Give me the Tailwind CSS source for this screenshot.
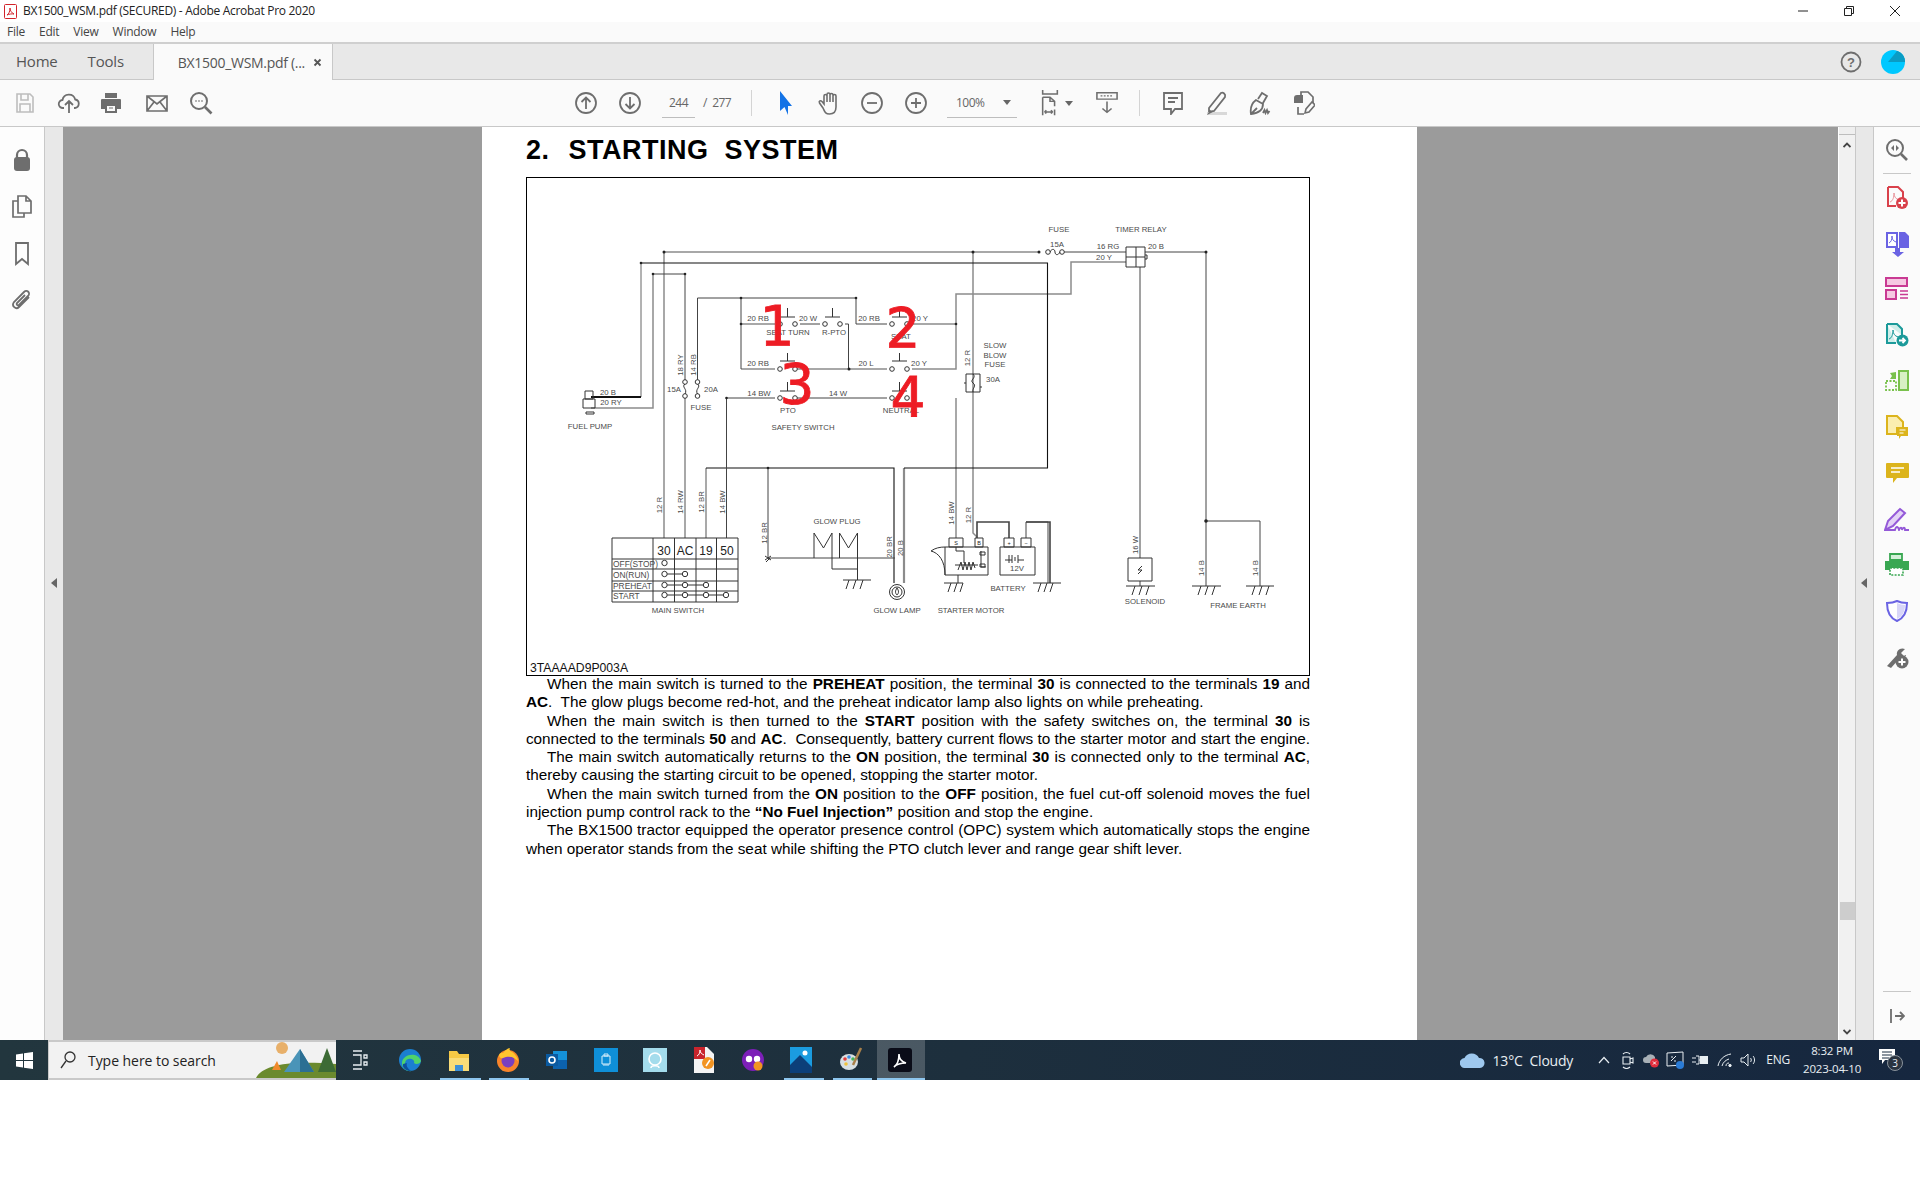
<!DOCTYPE html>
<html lang="en">
<head>
<meta charset="UTF-8" />
<title>BX1500_WSM.pdf (SECURED) - Adobe Acrobat Pro 2020</title>
<script src="https://cdn.jsdelivr.net/npm/@tailwindcss/browser@4"></script>
</head>
<body class="bg-white w-[1920px] h-[1188px] overflow-hidden font-['Open_Sans',sans-serif] text-[#4b4b4b]">

<!-- title bar -->
<div class="h-[22px] flex items-center bg-white text-[#222]">
  <svg class="ml-[4px] w-[13px] h-[15px]" viewBox="0 0 13 15"><rect x=".5" y=".5" width="12" height="14" rx="1" fill="#fff" stroke="#d2232a"/><path d="M3 11c2-1 3-4 3-7 0 3 2 5 4 6-2-.3-5 0-7 1z" fill="none" stroke="#d2232a"/></svg>
  <span class="ml-[6px] text-[12px] tracking-[-0.3px]">BX1500_WSM.pdf (SECURED) - Adobe Acrobat Pro 2020</span>
  <div class="ml-auto flex items-center">
    <svg class="w-[46px] h-[20px]" viewBox="0 0 46 20"><path d="M18 10h10" stroke="#222"/></svg>
    <svg class="w-[46px] h-[20px]" viewBox="0 0 46 20"><path d="M18.500 7.500h7v7h-7zM20.500 7.500v-2h7v7h-2" fill="none" stroke="#222"/></svg>
    <svg class="w-[46px] h-[20px] mr-[2px]" viewBox="0 0 46 20"><path d="M18 5l10 10M28 5L18 15" stroke="#222"/></svg>
  </div>
</div>

<!-- menu bar -->
<div class="h-[22px] bg-[#fafafa] border-b-2 border-[#cfcfcf] flex items-center pl-[7px] gap-[14px] text-[12px] text-[#444] tracking-[-0.25px]">
  <span>File</span><span>Edit</span><span>View</span><span>Window</span><span>Help</span>
</div>

<!-- tabs -->
<div class="h-[36px] bg-[#e8e8e8] border-b border-[#c8c8c8] flex items-stretch relative text-[#555]">
  <span class="ml-[16px] self-center text-[15px] tracking-[-0.2px]">Home</span>
  <span class="ml-[30px] self-center text-[15px] tracking-[-0.2px]">Tools</span>
  <div class="ml-[29px] w-[180px] h-[36px] bg-[#fafafa] border-x border-[#c8c8c8] flex items-center pl-[24px] text-[14px] tracking-[-0.3px]">
    <span>BX1500_WSM.pdf (...</span>
    <svg class="ml-[8px] w-[9px] h-[9px]" viewBox="0 0 9 9"><path d="M1.500 1.500l6 6M7.500 1.500l-6 6" stroke="#555" stroke-width="1.800"/></svg>
  </div>
  <div class="ml-auto flex items-center">
    <svg class="w-[22px] h-[22px]" viewBox="0 0 22 22"><circle cx="11" cy="11" r="9.500" fill="none" stroke="#6e6e6e" stroke-width="1.800"/><text x="11" y="15.500" text-anchor="middle" font-family="Liberation Sans" font-weight="700" font-size="13" fill="#6e6e6e">?</text></svg>
    <svg class="ml-[19px] mr-[15px] w-[24px] h-[24px]" viewBox="0 0 24 24"><circle cx="12" cy="12" r="12" fill="#00c8ff"/><path d="M12 12L16 1a12 12 0 0 1 8 11z" fill="#0096bd"/><path d="M7 12h17a12 12 0 0 0-8-11z" fill="#0a9cc4"/></svg>
  </div>
</div>

<!-- toolbar -->
<div class="h-[47px] bg-[#fafafa] border-b border-[#c8c8c8] flex items-center pl-[13px] text-[#666]">
  <svg class="w-6 h-6" viewBox="0 0 24 24" fill="none" stroke="#bdbdbd" stroke-width="1.600"><path d="M4 3h13l3 3v15H4zM8 3v6h7V3M7 21v-8h10v8"/></svg>
  <svg class="ml-[20px] w-6 h-6" viewBox="0 0 24 24" fill="none" stroke="#6e6e6e" stroke-width="1.800"><path d="M7 17H6a4 4 0 0 1-.5-8 6.500 6.500 0 0 1 12.700-.5A4.300 4.300 0 0 1 18 17h-1M12 22v-11M8 14l4-4 4 4"/></svg>
  <svg class="ml-[18px] w-6 h-6" viewBox="0 0 24 24"><path d="M6 2h12v5H6z" fill="#6e6e6e"/><path d="M3 8h18a1 1 0 0 1 1 1v9h-4v4H6v-4H2V9a1 1 0 0 1 1-1z" fill="#6e6e6e"/><path d="M8 15h8v5H8z" fill="#fafafa"/><path d="M10 17h4" stroke="#6e6e6e"/></svg>
  <svg class="ml-[22px] w-6 h-6" viewBox="0 0 24 24" fill="none" stroke="#6e6e6e" stroke-width="1.700"><path d="M2 5h20v15H2zM2 5l10 8 10-8M2 20l7-9M22 20l-7-9"/></svg>
  <svg class="ml-[20px] w-6 h-6" viewBox="0 0 24 24" fill="none" stroke="#6e6e6e" stroke-width="2"><circle cx="10" cy="10" r="8"/><path d="M16 16l6.500 6.500" stroke-width="2.600"/><path d="M6.500 10h1M9.500 10h1M12.500 10h1"/></svg>

  <svg class="ml-[361px] w-6 h-6" viewBox="0 0 24 24" fill="none" stroke="#6e6e6e" stroke-width="1.800"><circle cx="12" cy="12" r="10"/><path d="M12 18V6.500M7.500 11L12 6.500l4.500 4.500"/></svg>
  <svg class="ml-[20px] w-6 h-6" viewBox="0 0 24 24" fill="none" stroke="#6e6e6e" stroke-width="1.800"><circle cx="12" cy="12" r="10"/><path d="M12 6v11.500M7.500 13l4.500 4.500 4.500-4.500"/></svg>
  <div class="ml-[20px] w-[33px] h-[29px] border-b border-[#bdbdbd] flex items-center justify-center text-[12px] tracking-[-0.5px]">244</div>
  <span class="ml-[8px] w-[28px] text-[12px] tracking-[-0.5px] whitespace-nowrap">/&nbsp;&nbsp;277</span>
  <div class="ml-[20px] w-px h-[26px] bg-[#d4d4d4]"></div>
  <svg class="ml-[21px] w-6 h-6" viewBox="0 0 24 24"><path d="M7 0v20l4.500-4 3.500 8 0-9h4z" fill="#1473e6"/></svg>
  <svg class="ml-[20px] w-6 h-6" viewBox="0 0 24 24" fill="none" stroke="#6e6e6e" stroke-width="1.600"><path d="M6 17l-3.500-5c-1-2 1-3 2.500-1.500L7 13V5c0-2 3-2 3 0V3.500c0-2 3-2 3 0V4c0-2 3-2 3 0v1c0-2 3-2 3 0v11c0 4-2 7-6.500 7S8 21 6 17zM10 5v6M13 4v7M16 5v6"/></svg>
  <svg class="ml-[19px] w-6 h-6" viewBox="0 0 24 24" fill="none" stroke="#6e6e6e" stroke-width="1.800"><circle cx="12" cy="12" r="10"/><path d="M7 12h10"/></svg>
  <svg class="ml-[20px] w-6 h-6" viewBox="0 0 24 24" fill="none" stroke="#6e6e6e" stroke-width="1.800"><circle cx="12" cy="12" r="10"/><path d="M7 12h10M12 7v10"/></svg>
  <div class="ml-[19px] w-[70px] h-[29px] border-b border-[#bdbdbd] flex items-center pl-[9px] text-[12px] tracking-[-0.5px]">100%
    <svg class="ml-[18px] w-[8px] h-[5px]" viewBox="0 0 8 5"><path d="M0 0h8L4 5z" fill="#666"/></svg>
  </div>
  <svg class="ml-[22px] w-[22px] h-[26px]" viewBox="0 0 24 32" preserveAspectRatio="none" fill="none" stroke="#6e6e6e" stroke-width="1.700"><path d="M4 0v5h16V0M4 9h8l5 5v6M4 9v22M12 9v5h5M17 24v7M6 27h9M6 27l2-2M6 27l2 2M15 27l-2-2M15 27l-2 2"/></svg>
  <svg class="ml-[4px] w-[8px] h-[5px]" viewBox="0 0 8 5"><path d="M0 0h8L4 5z" fill="#666"/></svg>
  <svg class="ml-[23px] w-[22px] h-[22px]" viewBox="0 0 24 28" preserveAspectRatio="none" fill="none" stroke="#6e6e6e" stroke-width="1.700"><path d="M1 1h22v8H1z"/><path d="M5 5h14" stroke-dasharray="2 1.500"/><path d="M12 12v14M7 21l5 5 5-5"/></svg>
  <div class="ml-[21px] w-px h-[26px] bg-[#d4d4d4]"></div>
  <svg class="ml-[21px] w-6 h-6" viewBox="0 0 24 24" fill="none" stroke="#6e6e6e" stroke-width="1.800"><path d="M3 2h18v16h-7l-4 5v-5H3zM7 7h10M7 11h7"/></svg>
  <svg class="ml-[20px] w-6 h-6" viewBox="0 0 24 24"><path d="M4 17L16 2c2-1 5 1 4 4L9 20l-5 1z" fill="none" stroke="#6e6e6e" stroke-width="1.800"/><path d="M2 21h20v3H2z" fill="#d8d8d8"/><path d="M2 24l3-5 3 2z" fill="#6e6e6e"/></svg>
  <svg class="ml-[20px] w-6 h-6" viewBox="0 0 24 24" fill="none" stroke="#6e6e6e" stroke-width="1.800"><path d="M2 23c-1-6 1-11 5-14l7 4c0 5-3 9-12 10zM2 23l6-6M9 8l4-6 5 3-4 7"/><path d="M14 22l1.500-3 1 3 1.500-3 1 3 1.500-2"/></svg>
  <svg class="ml-[18px] w-6 h-6" viewBox="0 0 24 24"><path d="M3 7a3 3 0 0 1 3-3h6v8H3z" fill="#6e6e6e"/><path d="M10 4V1h7l5 5v6M7 16v7h6" fill="none" stroke="#6e6e6e" stroke-width="1.700"/><path d="M14 22l1-4 6-7 3 3-6 7z" fill="none" stroke="#6e6e6e" stroke-width="1.600"/></svg>
</div>

<!-- main area -->
<div class="h-[913px] flex overflow-hidden">
  <!-- left nav -->
  <div class="w-[45px] bg-[#fdfdfd] border-r border-[#c8c8c8] flex flex-col items-center pt-[21px] gap-[23px] pr-px">
    <svg class="w-[22px] h-[24px]" viewBox="0 0 22 24"><path d="M6 10V7a5 5 0 0 1 10 0v3" fill="none" stroke="#6e6e6e" stroke-width="2.200"/><rect x="3" y="9" width="16" height="14" rx="3" fill="#6e6e6e"/></svg>
    <svg class="w-[22px] h-[24px]" viewBox="0 0 22 24" fill="none" stroke="#6e6e6e" stroke-width="1.700"><path d="M7 18V1h8l5 5v12zM15 1v5h5M7 6H2v16h11v-4"/></svg>
    <svg class="w-[22px] h-[24px]" viewBox="0 0 22 24" fill="none" stroke="#6e6e6e" stroke-width="1.800"><path d="M5 1h12v21l-6-5-6 5z"/></svg>
    <svg class="w-[22px] h-[24px]" viewBox="0 0 22 24" fill="none" stroke="#6e6e6e" stroke-width="1.800"><path d="M18 8L8 18c-3 3-8-1-5-5L13 3c3-3 7 1 4 4L8 16c-1 1-3 0-2-2l8-8"/></svg>
  </div>
  <div class="w-[18px] bg-[#e8e8e8] flex items-center">
    <svg class="ml-[6px] w-[6px] h-[10px] mt-[-1px]" viewBox="0 0 6 10"><path d="M6 0v10L0 5z" fill="#666"/></svg>
  </div>

  <!-- document -->
  <div class="flex-1 bg-[#9b9b9b] pl-[419px] overflow-hidden">
    <div class="w-[935px] h-full bg-white pl-[44px] font-['Liberation_Sans',sans-serif] text-black">
      <h1 class="h-[50px] pt-[5px] text-[27px] leading-[36px] font-bold tracking-[0.5px] whitespace-pre">2.<span class="ml-[19px]">STARTING</span><span class="ml-[16px]">SYSTEM</span></h1>
      <div class="w-[784px] h-[499px] border border-black">
        <svg class="block" width="782" height="497" viewBox="527 178 782 497" font-family="Liberation Sans" font-size="7.800" fill="#4a4a4a">
          <g fill="none" stroke="#8c8c8c" stroke-width="1.500">
            <path d="M664 252H1039M664 252V538M973 252V533L977 537"/>
            <path d="M653 274V408H591M685 396V538M741 324H775M741 369H775M795 369H887M912 369H956V294H1071V262H1126M912 324H956M956 398V538"/>
            <path d="M904 468V583" stroke-width="2.200"/>
            <path d="M706 468V538"/>
          </g>
          <g fill="none" stroke="#666" stroke-width="1"><path d="M641 263V397"/></g>
          <g fill="none" stroke="#111" stroke-width="1.100">
            <path d="M641 263H1047.500V468H904M706 468H894V583"/>
            <path d="M591 397H641" stroke-width="1.800"/>
          </g>
          <g fill="none" stroke="#444" stroke-width="1">
            <path d="M653 274H685V382M697.500 382V298H856V324H887M741 298V369M787 324h0M800 324H820M845 324H848.500V369M726.500 538V398H775M795 398H887M1062 252H1126M1145 252H1206V586M1140 267V558M1140 581V586M1206 521H1260V586M768 468V558H895M1048 583V522H1026V538"/>
            <path d="M977 538V522H1009V538M1026 522H1050V583" stroke-width="1.600"/>
          </g>
          <!-- dots -->
          <g fill="#222">
            <circle cx="664" cy="252" r="1.500"/><circle cx="973" cy="252" r="1.500"/><circle cx="1039" cy="252" r="1.500"/><circle cx="1206" cy="252" r="1.500"/><circle cx="641" cy="263" r="1.300"/><circle cx="653" cy="274" r="1.300"/><circle cx="685" cy="274" r="1.300"/><circle cx="741" cy="298" r="1.300"/><circle cx="856" cy="298" r="1.300"/><circle cx="741" cy="324" r="1.300"/><circle cx="956" cy="324" r="1.300"/><circle cx="849" cy="369" r="1.500"/><circle cx="726.500" cy="398" r="1.300"/><circle cx="768" cy="468" r="1.300"/><circle cx="1206" cy="521" r="1.800"/>
          </g>
          <!-- switches -->
          <g fill="#fff" stroke="#333" stroke-width="1">
            <circle cx="780" cy="324" r="2.300"/><circle cx="795" cy="324" r="2.300"/><circle cx="825" cy="324" r="2.300"/><circle cx="840" cy="324" r="2.300"/><circle cx="892" cy="324" r="2.300"/><circle cx="907" cy="324" r="2.300"/>
            <circle cx="780" cy="369" r="2.300"/><circle cx="795" cy="369" r="2.300"/><circle cx="892" cy="369" r="2.300"/><circle cx="907" cy="369" r="2.300"/>
            <circle cx="780" cy="398" r="2.300"/><circle cx="795" cy="398" r="2.300"/><circle cx="892" cy="398" r="2.300"/><circle cx="907" cy="398" r="2.300"/>
            <circle cx="685" cy="382" r="2.300"/><circle cx="685" cy="396" r="2.300"/><circle cx="697.500" cy="382" r="2.300"/><circle cx="697.500" cy="396" r="2.300"/>
            <circle cx="1048" cy="252" r="2.300"/><circle cx="1062" cy="252" r="2.300"/>
          </g>
          <g fill="none" stroke="#333" stroke-width="1">
            <path d="M780 317H795M787.500 308V317M825 317H840M832.500 308V317M892 317H907M899.500 308V317M780 361H795M787.500 353V361M892 361H907M899.500 353V361M780 391H795M787.500 382V391M892 391H907M899.500 382V391"/>
            <path d="M685 384c-4 3 3 5 0 10M697.500 384c4 3-3 5 0 10M1050 252c2-4 5-3 5 0s3 4 5 0"/>
            <path d="M966 374h14v18h-14zM973 374c4 4-4 6 0 9s-1 5 0 9M966 383h-2M980 387h2"/>
            <path d="M1126 247h19v20h-19zM1136 247v20M1126 257h19M1145 255h2v4h-2"/>
            <path d="M585 391h8v8h-8zM583 399h12v9h-12zM586 412h8v2h-8z"/>
          </g>
          <!-- main switch -->
          <g fill="none" stroke="#333" stroke-width="1">
            <path d="M612 538H738V602H612zM653 538V602M674.500 538V602M696 538V602M716.500 538V602M612 559H738M612 569H738M612 581H738M612 591H738"/>
            <path d="M664.500 574H685M664.500 585H706M664.500 595H726"/>
          </g>
          <g fill="#fff" stroke="#333" stroke-width="1">
            <circle cx="664.500" cy="563" r="2.700"/><circle cx="664.500" cy="574" r="2.700"/><circle cx="685" cy="574" r="2.700"/><circle cx="664.500" cy="585" r="2.700"/><circle cx="685" cy="585" r="2.700"/><circle cx="706" cy="585" r="2.700"/><circle cx="664.500" cy="595" r="2.700"/><circle cx="685" cy="595" r="2.700"/><circle cx="706" cy="595" r="2.700"/><circle cx="726" cy="595" r="2.700"/>
          </g>
          <g font-size="12" fill="#222" text-anchor="middle"><text x="664" y="555">30</text><text x="685" y="555">AC</text><text x="706" y="555">19</text><text x="727" y="555">50</text></g>
          <g font-size="8.400"><text x="613" y="566.500">OFF(STOP)</text><text x="613" y="577.500">ON(RUN)</text><text x="613" y="588.500">PREHEAT</text><text x="613" y="599">START</text></g>
          <!-- glow plug + lamp -->
          <g fill="none" stroke="#333" stroke-width="1">
            <path d="M814 533V558M814 533L823.500 548L832 533V569M839.500 533V558M839.500 533L848.500 548L857.500 533V569V580M832 569H857.500M843 580H871M846 589l3-9M853 589l3-9M860 589l3-9"/>
            <circle cx="897" cy="592" r="7.500"/><circle cx="897" cy="592" r="5"/><path d="M897 588c-2 3-2 5 0 7 2-2 2-4 0-7z"/>
            <path d="M765 556l6 4M765 560l6-4M766 562l4-4"/>
            <path d="M944 583H963M958 575V583M948 592l3-9M954 592l3-9M960 592l3-9M1033 583H1061M1038 592l3-9M1044 592l3-9M1050 592l3-9"/>
            <path d="M949 538h14v9h-14zM975 538h8v9h-8zM945 547h43v28h-43zM945 575c0-14-6-22-14-24 4-3 9-4 14-4"/>
            <path d="M956 547v4h8v12M958 570l3-8 2 8 2-8 2 8 2-8 2 8 2-8 2 6M955 565h23M981 551v16h5M980 552h5v3h-5zM980 564h5v3h-5z"/>
            <path d="M1000 547h35v28h-35zM1004 538h10v9h-10zM1021 538h10v9h-10zM1009 555v8M1005 560h7M1012 555v8M1015 557v4M1018 555v8M1018 560h6"/>
            <path d="M1128 558h24v23h-24zM1142 566l-4 4h4l-4 4"/>
            <path d="M1126 586H1155M1132 595l3-9M1139 595l3-9M1146 595l3-9M1192 586H1221M1198 595l3-9M1205 595l3-9M1212 595l3-9M1246 586H1274M1252 595l3-9M1259 595l3-9M1266 595l3-9"/>
          </g>
          <g font-size="5.500" text-anchor="middle" fill="#222"><text x="956" y="545">S</text><text x="979" y="545">B</text><text x="1009" y="545">+</text><text x="1026" y="545">−</text></g>
          <!-- labels -->
          <g text-anchor="middle">
            <text x="1059" y="232">FUSE</text><text x="1141" y="232">TIMER RELAY</text><text x="1057" y="247">15A</text><text x="1108" y="249">16 RG</text><text x="1104" y="260">20 Y</text><text x="1156" y="249">20 B</text>
            <text x="758" y="321">20 RB</text><text x="808" y="321">20 W</text><text x="788" y="335">SEAT TURN</text><text x="834" y="335">R-PTO</text><text x="869" y="321">20 RB</text><text x="920" y="321">20 Y</text><text x="901" y="339">SEAT</text>
            <text x="758" y="366">20 RB</text><text x="866" y="366">20 L</text><text x="919" y="366">20 Y</text><text x="759" y="396">14 BW</text><text x="838" y="396">14 W</text><text x="788" y="413">PTO</text><text x="901" y="413">NEUTRAL</text><text x="803" y="430">SAFETY SWITCH</text>
            <text x="674" y="392">15A</text><text x="711" y="392">20A</text><text x="701" y="410">FUSE</text><text x="608" y="395">20 B</text><text x="611" y="405">20 RY</text><text x="590" y="429">FUEL PUMP</text>
            <text x="995" y="348">SLOW</text><text x="995" y="358">BLOW</text><text x="995" y="367">FUSE</text><text x="993" y="382">30A</text>
            <text x="837" y="524">GLOW PLUG</text><text x="678" y="613">MAIN SWITCH</text><text x="897" y="613">GLOW LAMP</text><text x="971" y="613">STARTER MOTOR</text><text x="1008" y="591">BATTERY</text><text x="1017" y="571">12V</text><text x="1145" y="604">SOLENOID</text><text x="1238" y="608">FRAME EARTH</text>
            <text transform="rotate(-90 683 365)" x="683" y="365">18 RY</text><text transform="rotate(-90 695.500 365)" x="695.500" y="365">14 RB</text><text transform="rotate(-90 970 358)" x="970" y="358">12 R</text>
            <text transform="rotate(-90 662 505)" x="662" y="505">12 R</text><text transform="rotate(-90 683 502)" x="683" y="502">14 RW</text><text transform="rotate(-90 704 502)" x="704" y="502">12 BR</text><text transform="rotate(-90 725 502)" x="725" y="502">14 BW</text><text transform="rotate(-90 767 533)" x="767" y="533">12 BR</text>
            <text transform="rotate(-90 892 547)" x="892" y="547">20 BR</text><text transform="rotate(-90 903 548)" x="903" y="548">20 B</text><text transform="rotate(-90 954 513)" x="954" y="513">14 BW</text><text transform="rotate(-90 971 515)" x="971" y="515">12 R</text><text transform="rotate(-90 1138 545)" x="1138" y="545">16 W</text><text transform="rotate(-90 1204 568)" x="1204" y="568">14 B</text><text transform="rotate(-90 1258 568)" x="1258" y="568">14 B</text>
          </g>
          <text x="530" y="671.500" font-size="12.200" fill="#111">3TAAAAD9P003A</text>
          <!-- hand-written markers -->
          <g font-family="DejaVu Sans" font-size="55" fill="#ed1c24" stroke="#ed1c24" stroke-width=".8" text-anchor="middle">
            <text x="777" y="345">1</text><text x="903" y="347">2</text><text x="797" y="403">3</text><text x="908" y="416">4</text>
          </g>
        </svg>
      </div>
      <div class="w-[784px] -mt-px text-[15.3px] leading-[18.3px] text-justify">
        <p class="indent-[21px]">When the main switch is turned to the <b>PREHEAT</b> position, the terminal <b>30</b> is connected to the terminals <b>19</b> and <b>AC</b>.&nbsp; The glow plugs become red-hot, and the preheat indicator lamp also lights on while preheating.</p>
        <p class="indent-[21px] [text-align-last:justify]">When the main switch is then turned to the <b>START</b> position with the safety switches on, the terminal <b>30</b> is <span class="tracking-[-0.06px]">connected to the terminals <b>50</b> and <b>AC</b>.&nbsp; Consequently, battery current flows to the starter motor and start the engine.</span></p>
        <p class="indent-[21px]">The main switch automatically returns to the <b>ON</b> position, the terminal <b>30</b> is connected only to the terminal <b>AC</b>, thereby causing the starting circuit to be opened, stopping the starter motor.</p>
        <p class="indent-[21px]">When the main switch turned from the <b>ON</b> position to the <b>OFF</b> position, the fuel cut-off solenoid moves the fuel injection pump control rack to the <b>“No Fuel Injection”</b> position and stop the engine.</p>
        <p class="indent-[21px]">The BX1500 tractor equipped the operator presence control (OPC) system which automatically stops the engine when operator stands from the seat while shifting the PTO clutch lever and range gear shift lever.</p>
      </div>
    </div>
  </div>

  <!-- vertical scrollbar -->
  <div class="w-px bg-white"></div>
  <div class="w-[17px] bg-[#f1f1f1] border-r border-[#c8c8c8] flex flex-col items-center">
    <div class="w-full h-[8px] bg-[#efefef] border-b border-[#bdbdbd]"></div>
    <svg class="mt-[7px] w-[8px] h-[6px]" viewBox="0 0 8 6"><path d="M.5 5L4 1.500 7.500 5" fill="none" stroke="#444" stroke-width="1.800"/></svg>
    <div class="mt-[754px] w-[15px] h-[18px] bg-[#cdcdcd]"></div>
    <svg class="mt-[109px] w-[8px] h-[6px]" viewBox="0 0 8 6"><path d="M.5 1L4 4.500 7.500 1" fill="none" stroke="#444" stroke-width="1.800"/></svg>
  </div>
  <div class="w-[18px] bg-[#e8e8e8] border-r border-[#c8c8c8] flex items-center">
    <svg class="ml-[5px] w-[6px] h-[10px] mt-[-1px]" viewBox="0 0 6 10"><path d="M6 0v10L0 5z" fill="#666"/></svg>
  </div>

  <!-- tools pane -->
  <div class="w-[46px] bg-[#fbfbfb] flex flex-col items-center">
    <svg class="mt-[12px] w-[22px] h-[22px]" viewBox="0 0 22 22" fill="none" stroke="#6e6e6e" stroke-width="2"><circle cx="9" cy="9" r="8"/><path d="M15 15l6 6" stroke-width="2.600"/><path d="M8 6v6L5 9zM10 6v6l3-3z" fill="#6e6e6e" stroke="none"/></svg>
    <div class="mt-[12px] w-[28px] h-px bg-[#c8c8c8]"></div>
    <svg class="mt-[12px] w-[24px] h-[24px]" viewBox="0 0 24 24"><path d="M3 1h10l5 5v6M3 1v19h8" fill="none" stroke="#d9414b" stroke-width="2"/><path d="M5 16c3-1 4-5 4-9 0 4 2 6 5 7" fill="none" stroke="#e9939a"/><circle cx="17" cy="17" r="6" fill="#d9414b"/><path d="M13.500 17h7M17 13.500v7" stroke="#fff" stroke-width="2"/></svg>
    <svg class="mt-[21px] w-[24px] h-[26px]" viewBox="0 0 24 26"><path d="M2 2h10v14H2z" fill="#fff" stroke="#6a63e3" stroke-width="2"/><path d="M14 1h6l4 4v12H14z" fill="#6a63e3"/><path d="M4 12c2-1 3-3 3-7 0 3 1 5 4 6" fill="none" stroke="#6a63e3"/><path d="M10 17h5v4h4l-6 5-6-5h3z" fill="#6a63e3"/></svg>
    <svg class="mt-[20px] w-[24px] h-[24px]" viewBox="0 0 24 24"><rect x="1" y="1" width="21" height="8" fill="#f6c9e2" stroke="#c93a93" stroke-width="2"/><rect x="1" y="13" width="10" height="9" fill="#f6c9e2" stroke="#c93a93" stroke-width="2"/><path d="M15 14h8M15 17.500h8M15 21h8" stroke="#c93a93" stroke-width="1.300"/></svg>
    <svg class="mt-[22px] w-[24px] h-[24px]" viewBox="0 0 24 24"><path d="M2 1h10l5 5v6M2 1v19h9" fill="#cfeeea" stroke="#1c9a9a" stroke-width="2"/><path d="M4 16c3-1 4-5 4-9 0 4 2 6 5 7" fill="none" stroke="#1c9a9a"/><circle cx="17.500" cy="17.500" r="6" fill="#1c9a9a"/><path d="M14 17.500h6M17.500 15l2.500 2.500-2.500 2.500" stroke="#fff" stroke-width="1.800" fill="none"/></svg>
    <svg class="mt-[23px] w-[24px] h-[22px]" viewBox="0 0 24 22"><rect x="14" y="1" width="9" height="19" fill="#d8f0c4" stroke="#79c14c" stroke-width="2"/><path d="M1 11h10v9H1z" fill="none" stroke="#79c14c" stroke-width="1.800" stroke-dasharray="2 1.500"/><path d="M11 2v7H5l2-3L5 3z" fill="#79c14c"/></svg>
    <svg class="mt-[23px] w-[24px] h-[24px]" viewBox="0 0 24 24"><path d="M2 1h10l6 6v6H12v6H2z" fill="#fbeeb0" stroke="#dcb41c" stroke-width="2"/><path d="M12 12h11v9h-7l-2 3v-3h-2z" fill="#dcb41c"/><path d="M14.500 15h6M14.500 18h4" stroke="#fff"/></svg>
    <svg class="mt-[23px] w-[24px] h-[22px]" viewBox="0 0 24 22"><path d="M2 1h21a1 1 0 0 1 1 1v13a1 1 0 0 1-1 1H12l-4 5v-5H2a1 1 0 0 1-1-1V2a1 1 0 0 1 1-1z" fill="#dcb41c"/><path d="M6 6h13M6 10h9" stroke="#fff" stroke-width="1.500"/></svg>
    <svg class="mt-[23px] w-[26px] h-[24px]" viewBox="0 0 26 24"><path d="M1 23l3-9L16 2l5 4L9 19z" fill="#e3d3f6" stroke="#9459d8" stroke-width="2"/><path d="M1 23h10c1-4 3-4 4 0 1-3 3-3 3 0 1-3 3-3 3 0h4" fill="none" stroke="#9459d8" stroke-width="1.800"/></svg>
    <svg class="mt-[21px] w-[26px] h-[24px]" viewBox="0 0 26 24"><path d="M6 2h12v6H6z" fill="#d3f0d8" stroke="#39a752" stroke-width="1.800"/><path d="M1 9h24v9H1z" fill="#39a752"/><path d="M6 16h13v7H6z" fill="#fff" stroke="#39a752" stroke-dasharray="2 1.300" stroke-width="1.600"/></svg>
    <svg class="mt-[23px] w-[24px] h-[24px]" viewBox="0 0 24 24"><path d="M12 2c4 2 7 2 10 2 0 9-3 15-10 18C5 19 2 13 2 4c3 0 6 0 10-2z" fill="#fff" stroke="#6a63e3" stroke-width="2"/><path d="M12 4c3 1 5 2 8 2 0 7-3 12-8 14z" fill="#d8d6f8"/></svg>
    <svg class="mt-[22px] w-[24px] h-[24px]" viewBox="0 0 24 24"><path d="M2 21L12 10c-1-4 3-8 8-6l-4 4 3 3c1-1 1-1 2-1-.5 3-4 5-7 4L6 23z" fill="#6e6e6e"/><circle cx="17" cy="17" r="6.500" fill="#6e6e6e"/><path d="M13.500 17h7M17 13.500v7" stroke="#fff" stroke-width="2"/></svg>
    <div class="mt-[322px] w-[28px] h-px bg-[#c8c8c8]"></div>
    <svg class="mt-[16px] w-[16px] h-[16px]" viewBox="0 0 16 16" fill="none" stroke="#6e6e6e" stroke-width="1.800"><path d="M2 1v14M6 8h9M11 4l4 4-4 4"/></svg>
  </div>
</div>

<!-- taskbar -->
<div class="h-[40px] bg-linear-to-r from-[#22363e] via-[#1d2f3d] to-[#16273f] flex items-stretch font-['Open_Sans',sans-serif] text-[#e8eef2] relative">
  <div class="w-[48px] flex items-center justify-center">
    <svg class="w-[17px] h-[17px]" viewBox="0 0 17 17"><path d="M0 2.500L7 1.500v6.500H0zM8 1.300L17 0v8H8zM0 9h7v6.500L0 14.500zM8 9h9v8l-9-1.300z" fill="#fff"/></svg>
  </div>
  <div class="w-[288px] bg-[#f2f2f2] border-t-2 border-b-2 border-l border-[#c9c9c9] flex items-center overflow-hidden text-[#222]">
    <svg class="ml-[11px] w-[16px] h-[18px]" viewBox="0 0 16 18" fill="none" stroke="#333" stroke-width="1.300"><circle cx="10" cy="6" r="5"/><path d="M6 10l-5 7"/></svg>
    <span class="ml-[12px] text-[14px] tracking-[-0.05px]">Type here to search</span>
    <svg class="ml-auto w-[80px] h-[36px]" viewBox="0 0 80 36"><path d="M0 36c6-12 30-18 80-14v14z" fill="#6b8a2e"/><circle cx="26" cy="6" r="6" fill="#e8b06a"/><path d="M16 28l5-9 4 9z" fill="#f08a2c"/><path d="M28 30L44 7l14 23z" fill="#4a94b8"/><path d="M44 7l14 23H44z" fill="#2c6f93"/><path d="M62 30l9-24 9 24z" fill="#3d6b35"/></svg>
  </div>
  <svg class="ml-[16px] w-[16px] h-[20px] self-center" viewBox="0 0 16 20" fill="none" stroke="#e8eef2" stroke-width="1.300"><path d="M1 1h9M1 19h9M1 5h8v10H1M12 5h3v3h-3zM12 12h3v3h-3z"/></svg>
  <div class="ml-[30px] flex items-center gap-[25px]">
    <svg class="w-[24px] h-[24px]" viewBox="0 0 24 24"><circle cx="12" cy="12" r="11" fill="#1b7fd1"/><path d="M4 15C4 6 20 3 23 13c-1 3-5 4-7 2 2-4-8-7-9 0-1 4 3 8 7 8C8 24 4 20 4 15z" fill="#4fd36b"/><path d="M5 16c-1 4 4 8 9 7-5-2-6-6-5-8z" fill="#0c4f9e"/></svg>
    <svg class="w-[24px] h-[24px]" viewBox="0 0 24 24"><path d="M2 3h8l2 3h10v17H2z" fill="#f6c945"/><path d="M2 10h20v13H2z" fill="#f9dc78"/><path d="M8 17h8v6H8z" fill="#3d8fd6"/></svg>
    <svg class="w-[24px] h-[26px]" viewBox="0 0 24 26"><circle cx="12" cy="14" r="11" fill="#f8842a"/><circle cx="12" cy="14" r="6.500" fill="#7a3fbf"/><path d="M3 8c2-3 3-2 4-2 3-4 6-5 7-5-1 2 0 3 2 4 3 2 6 6 6 9-3-3-8-6-15-3-2 1-4-1-4-3z" fill="#ffc52e"/></svg>
    <svg class="w-[24px] h-[24px]" viewBox="0 0 24 24"><path d="M8 3h14v18H8z" fill="#1491d8"/><path d="M8 12h14v9H8z" fill="#0c62ad"/><rect x="1" y="6" width="12" height="12" fill="#0a5aa0"/><circle cx="7" cy="12" r="3" fill="none" stroke="#fff" stroke-width="1.600"/></svg>
    <svg class="w-[24px] h-[24px]" viewBox="0 0 24 24"><rect width="24" height="24" fill="#0f8fd8"/><path d="M8 8h8v8H8zM10 6h4v2h-4zM9 17h6" fill="none" stroke="#d8eefa"/></svg>
    <svg class="w-[24px] h-[24px]" viewBox="0 0 24 24"><rect width="24" height="24" fill="#a4dcec"/><circle cx="12" cy="11" r="6" fill="none" stroke="#fff" stroke-width="1.600"/><path d="M8 20c0-3 8-3 8 0" fill="none" stroke="#fff" stroke-width="1.600"/></svg>
    <svg class="w-[24px] h-[26px]" viewBox="0 0 24 26"><path d="M2 0h13l7 7v19H2z" fill="#f4f4f4"/><path d="M2 0h11v12H2z" fill="#c9252d"/><path d="M5 9c2-1 3-3 3-6 0 3 2 4 4 5" fill="none" stroke="#fff"/><circle cx="16" cy="16" r="6" fill="#f29422"/><path d="M14 19l4-6" stroke="#fff" stroke-width="1.500"/></svg>
    <svg class="w-[24px] h-[24px]" viewBox="0 0 24 24"><circle cx="12" cy="12" r="11" fill="#7c1fb8"/><circle cx="8" cy="11" r="3.200" fill="#fff"/><circle cx="16" cy="11" r="3.200" fill="#fff"/><circle cx="17" cy="18" r="4.500" fill="#f29422"/></svg>
    <svg class="w-[24px] h-[26px]" viewBox="0 0 24 26"><rect width="22" height="26" fill="#1b9ce0"/><path d="M0 18l10-10 12 12v6H0z" fill="#0c3f79"/><circle cx="15" cy="6" r="2.500" fill="#fff"/></svg>
    <svg class="w-[24px] h-[26px]" viewBox="0 0 24 26"><ellipse cx="10" cy="15" rx="9" ry="8" fill="#d8dfe2"/><circle cx="6" cy="12" r="1.800" fill="#e23b3b"/><circle cx="10" cy="10" r="1.800" fill="#3b8de2"/><circle cx="14" cy="12" r="1.800" fill="#42b55b"/><circle cx="7" cy="17" r="1.800" fill="#f0c23c"/><path d="M14 18L22 1" stroke="#a9804a" stroke-width="2.500"/></svg>
    <div class="w-[24px] h-[24px] rounded-[3px] bg-[#0a0c18] flex items-center justify-center relative z-10">
      <svg class="w-[14px] h-[17px]" viewBox="0 0 14 17"><path d="M1 15c3-2 5-7 5-13 0 5 3 8 7 9-4 0-9 1-12 4z" fill="none" stroke="#fff" stroke-width="1.600"/></svg>
    </div>
  </div>
  <div class="absolute left-[877px] top-0 w-[48px] h-[40px] bg-white/20"></div>
  <!-- running app underlines -->
  <div class="absolute left-[440px] bottom-0 w-[41px] h-[2px] bg-[#8ec6ee]"></div>
  <div class="absolute left-[489px] bottom-0 w-[40px] h-[2px] bg-[#8ec6ee]"></div>
  <div class="absolute left-[784px] bottom-0 w-[40px] h-[2px] bg-[#8ec6ee]"></div>
  <div class="absolute left-[833px] bottom-0 w-[39px] h-[2px] bg-[#8ec6ee]"></div>
  <div class="absolute left-[877px] bottom-0 w-[48px] h-[2px] bg-[#8ec6ee]"></div>

  <!-- system tray -->
  <div class="ml-auto flex items-center pr-[19px]">
    <svg class="w-[25px] h-[16px]" viewBox="0 0 25 16"><path d="M5 16a5 5 0 0 1-.5-10A8 8 0 0 1 19 6a5 5 0 0 1 1 10z" fill="#9ec8ee"/></svg>
    <span class="ml-[8px] text-[14px] whitespace-pre tracking-[-0.2px]">13°C  Cloudy</span>
    <svg class="ml-[25px] w-[12px] h-[8px]" viewBox="0 0 12 8"><path d="M1 7l5-5.500L11 7" fill="none" stroke="#e8eef2" stroke-width="1.200"/></svg>
    <svg class="ml-[11px] w-[14px] h-[18px]" viewBox="0 0 14 18" fill="none" stroke="#e8eef2" stroke-width="1.100"><path d="M2 6h7v7H2zM9 8l3-1v5l-3-1M2 3c2-2 5-2 7 0M2 16c2 2 5 2 7 0"/></svg>
    <svg class="ml-[7px] w-[18px] h-[16px]" viewBox="0 0 18 16"><path d="M4 11a3 3 0 0 1 0-6 5 5 0 0 1 9 0v6z" fill="#a8b0b6"/><circle cx="12.500" cy="11" r="4.500" fill="#e02d3c"/><path d="M11 9.500l3 3M14 9.500l-3 3" stroke="#fff"/></svg>
    <svg class="ml-[6px] w-[20px] h-[20px]" viewBox="0 0 20 20"><path d="M1 3l16-1v13l-16 1z" fill="none" stroke="#e8eef2"/><path d="M5 11l5-5M5 7h2M8 11h2" stroke="#e8eef2"/><circle cx="14" cy="15" r="4" fill="#2a7bd6"/></svg>
    <svg class="ml-[6px] w-[17px] h-[12px]" viewBox="0 0 17 12"><path d="M0 4h4M0 8h4M4 2h3v8H4M7 6h2" stroke="#e8eef2" fill="none"/><rect x="8" y="2" width="8" height="8" fill="#e8eef2"/></svg>
    <svg class="ml-[8px] w-[16px] h-[14px]" viewBox="0 0 16 14" fill="none" stroke="#e8eef2"><path d="M1 13C2 7 7 2 14 1M5 13c1-4 4-6 7-7M9 13c0-2 1-3 3-3"/><circle cx="13" cy="12.500" r="1.200" fill="#e8eef2"/></svg>
    <svg class="ml-[7px] w-[16px] h-[14px]" viewBox="0 0 16 14" fill="none" stroke="#e8eef2"><path d="M1 5h3l4-4v12L4 9H1zM10.500 5c1 1 1 3 0 4M13 3c2 2 2 6 0 8"/></svg>
    <span class="ml-[10px] text-[12px] tracking-[-0.2px]">ENG</span>
    <div class="ml-[13px] w-[58px] flex flex-col items-center text-[11.5px] leading-[18px] tracking-[-0.2px]">
      <span>8:32 PM</span><span>2023-04-10</span>
    </div>
    <div class="ml-[18px] relative w-[22px] h-[22px]">
      <svg class="w-[16px] h-[16px]" viewBox="0 0 16 16"><path d="M0 0h16v11H6l-3 4v-4H0z" fill="#fff"/><path d="M3 3h10M3 6h10M3 9h7" stroke="#1b2c40"/></svg>
      <div class="absolute left-[8px] top-[6px] w-[16px] h-[16px] rounded-full bg-[#2a3441] border border-[#8a939c] flex items-center justify-center text-[10px] leading-none">3</div>
    </div>
  </div>
</div>
</body>
</html>
